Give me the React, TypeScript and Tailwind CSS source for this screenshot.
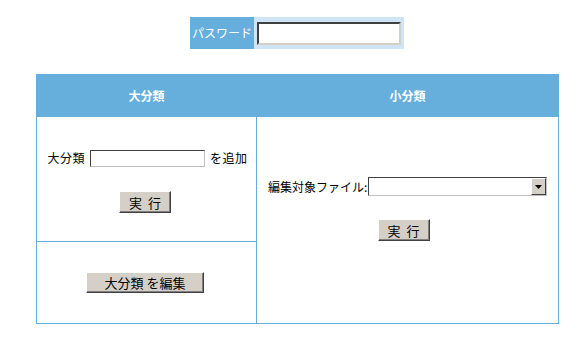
import React from "react";

const font = { fontFamily: '"MS UI Gothic", "Noto Sans CJK JP", sans-serif' };

function ClassicButton({ children, className }: { children: React.ReactNode; className: string }) {
  return (
    <button
      type="button"
      className={`bg-[#d4d0c8] border border-t-white border-l-white border-r-[#404040] border-b-[#404040] shadow-[inset_-1px_-1px_0_#808080] text-[13px] leading-none text-black ${className}`}
    >
      {children}
    </button>
  );
}

export default function App() {
  return (
    <div className="w-[581px] h-[340px] bg-white text-[12px] text-black" style={font}>
      <div className="pt-[17px] flex justify-center">
        <div className="ml-[13px] flex h-[32px] bg-[#cfe5f5]">
          <div className="w-[64px] bg-[#66afdc] text-white flex items-center justify-center text-[12px]">
            パスワード
          </div>
          <div className="px-[3px] flex items-center">
            <input
              type="password"
              className="w-[144px] h-[23px] bg-white border-2 border-t-[#404040] border-l-[#404040] border-r-[#d4d0c8] border-b-[#d4d0c8] outline-none"
            />
          </div>
        </div>
      </div>

      <table className="ml-[36px] mt-[25px] border-collapse table-fixed w-[522px]">
        <colgroup>
          <col className="w-[220px]" />
          <col className="w-[302px]" />
        </colgroup>
        <thead>
          <tr className="h-[42px] bg-[#66afdc] text-white font-bold">
            <th className="border border-[#66afdc] text-[12px] pt-[1px]">大分類</th>
            <th className="border border-[#66afdc] text-[12px] pt-[1px]">小分類</th>
          </tr>
        </thead>
        <tbody>
          <tr className="h-[125px]">
            <td className="border border-[#66afdc] p-0 align-top">
              <div className="flex items-center justify-center gap-[5px] pt-[32px] pl-[2px] tracking-[0.5px]">
                <span>大分類</span>
                <input
                  type="text"
                  className="w-[115px] h-[17px] bg-white border border-t-[#404040] border-l-[#404040] border-r-[#c0c0c0] border-b-[#c0c0c0] outline-none"
                />
                <span>を追加</span>
              </div>
              <div className="flex justify-center pt-[24px] pr-[3px]">
                <ClassicButton className="w-[52px] h-[22px] tracking-[6px] pl-[6px]">実行</ClassicButton>
              </div>
            </td>
            <td rowSpan={2} className="border border-[#66afdc] p-0 align-top">
              <div className="flex items-center pl-[11px] pt-[60px]">
                <span>編集対象ファイル:</span>
                <div className="ml-[1px] w-[179px] h-[19px] flex border border-t-[#404040] border-l-[#404040] border-r-[#c0c0c0] border-b-[#c0c0c0] bg-white">
                  <div className="flex-1" />
                  <div className="w-[15px] h-full bg-[#d4d0c8] border border-t-white border-l-white border-r-[#404040] border-b-[#404040] flex items-center justify-center">
                    <svg width="7" height="4" viewBox="0 0 7 4">
                      <path d="M0 0h7L3.5 4z" fill="#000" />
                    </svg>
                  </div>
                </div>
              </div>
              <div className="flex justify-center pt-[23px] pr-[8px]">
                <ClassicButton className="w-[52px] h-[22px] tracking-[6px] pl-[6px]">実行</ClassicButton>
              </div>
            </td>
          </tr>
          <tr className="h-[82px]">
            <td className="border border-[#66afdc] p-0 align-top">
              <div className="flex justify-center pt-[30px] pr-[3px]">
                <ClassicButton className="w-[118px] h-[21px]">大分類 を編集</ClassicButton>
              </div>
            </td>
          </tr>
        </tbody>
      </table>
    </div>
  );
}
